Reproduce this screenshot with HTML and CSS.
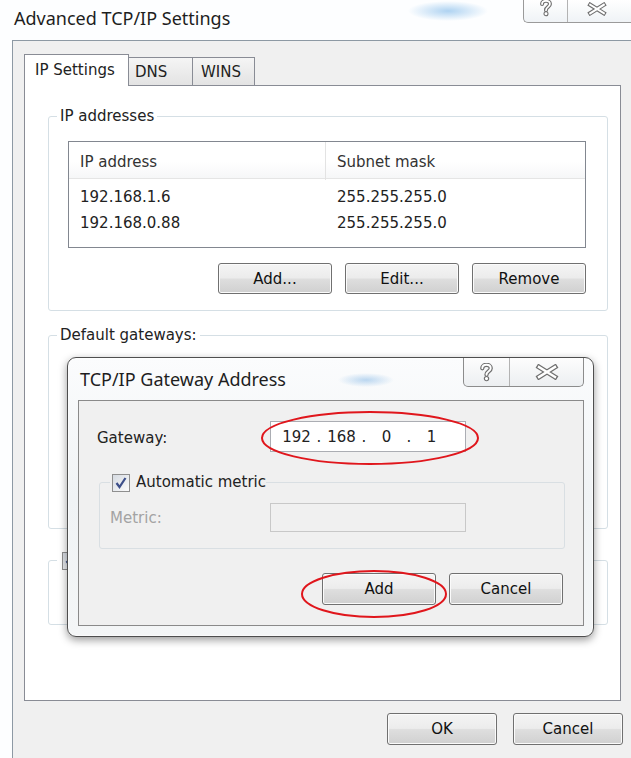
FILE: index.html
```html
<!DOCTYPE html>
<html lang="en">
<head>
<meta charset="utf-8">
<title>Advanced TCP/IP Settings</title>
<link rel="stylesheet" href="styles.css">
</head>
<body>
<div class="window">
  <header class="titlebar">
    <span class="title">Advanced TCP/IP Settings</span>
    <div class="caption">
      <span class="cap-btn cap-help">
        <svg width="14" height="18" viewBox="0 0 16 20"><path d="M3.5 5.5 C3.5 0.5 12.5 0.5 12.5 5.5 C12.5 9 8 8.5 8 12.5" fill="none" stroke="#6f6f6f" stroke-width="4.6" stroke-linecap="round"/><path d="M3.5 5.5 C3.5 0.5 12.5 0.5 12.5 5.5 C12.5 9 8 8.5 8 12.5" fill="none" stroke="#fff" stroke-width="2" stroke-linecap="round"/><circle cx="8" cy="16.5" r="2.3" fill="#fff" stroke="#6f6f6f" stroke-width="1.2"/></svg>
      </span>
      <span class="cap-btn cap-close">
        <svg width="22" height="14" viewBox="0 0 26 16"><path d="M5 3 L21 13 M21 3 L5 13" stroke="#6f6f6f" stroke-width="5" stroke-linecap="square"/><path d="M5 3 L21 13 M21 3 L5 13" stroke="#fff" stroke-width="2.4" stroke-linecap="square"/></svg>
      </span>
    </div>
  </header>

  <div class="client">
    <div class="tabs">
      <div class="tab tab-active">IP Settings</div>
      <div class="tab tab-dns">DNS</div>
      <div class="tab tab-wins">WINS</div>
    </div>

    <div class="tabpage">
      <fieldset class="group">
        <legend>IP addresses</legend>
        <div class="group-body">
          <div class="listview">
            <div class="lv-head">
              <span class="lv-col lv-col-first">IP address</span>
              <span class="lv-col">Subnet mask</span>
            </div>
            <div class="lv-rows">
              <div class="lv-row"><span>192.168.1.6</span><span>255.255.255.0</span></div>
              <div class="lv-row"><span>192.168.0.88</span><span>255.255.255.0</span></div>
            </div>
          </div>
          <div class="btn-row">
            <button class="btn">Add...</button>
            <button class="btn">Edit...</button>
            <button class="btn">Remove</button>
          </div>
        </div>
      </fieldset>

      <fieldset class="group group-gw">
        <legend>Default gateways:</legend>
        <div class="group-body gw-body"></div>
      </fieldset>

      <fieldset class="group group-metric">
        <legend>
          <span class="check-label">
            <span class="checkbox"><svg width="14" height="14" viewBox="0 0 14 14"><path d="M2.5 7 L5.5 11 L11.5 2" fill="none" stroke="#3d4f8a" stroke-width="2.2"/></svg></span>
            <span>Automatic metric</span>
          </span>
        </legend>
        <div class="metric-body"></div>
      </fieldset>
    </div>

    <div class="footer">
      <button class="btn btn-dialog">OK</button>
      <button class="btn btn-dialog">Cancel</button>
    </div>
  </div>

  <div class="modal">
    <div class="modal-titlebar">
      <span class="modal-title">TCP/IP Gateway Address</span>
      <div class="modal-caption">
        <span class="cap-btn mcap-help">
          <svg width="15" height="19" viewBox="0 0 16 20"><path d="M3.5 5.5 C3.5 0.5 12.5 0.5 12.5 5.5 C12.5 9 8 8.5 8 12.5" fill="none" stroke="#6f6f6f" stroke-width="4.6" stroke-linecap="round"/><path d="M3.5 5.5 C3.5 0.5 12.5 0.5 12.5 5.5 C12.5 9 8 8.5 8 12.5" fill="none" stroke="#fff" stroke-width="2" stroke-linecap="round"/><circle cx="8" cy="16.5" r="2.3" fill="#fff" stroke="#6f6f6f" stroke-width="1.2"/></svg>
        </span>
        <span class="cap-btn mcap-close">
          <svg width="26" height="16" viewBox="0 0 26 16"><path d="M5 3 L21 13 M21 3 L5 13" stroke="#6f6f6f" stroke-width="5" stroke-linecap="square"/><path d="M5 3 L21 13 M21 3 L5 13" stroke="#fff" stroke-width="2.4" stroke-linecap="square"/></svg>
        </span>
      </div>
    </div>

    <div class="modal-client">
      <div class="field-row">
        <span class="field-label">Gateway:</span>
        <div class="ipbox">
          <span class="ip-seg">192</span><span class="ip-dot">.</span>
          <span class="ip-seg">168</span><span class="ip-dot">.</span>
          <span class="ip-seg">0</span><span class="ip-dot">.</span>
          <span class="ip-seg">1</span>
        </div>
      </div>

      <fieldset class="metric-group">
        <legend>
          <span class="check-label">
            <span class="checkbox"><svg width="14" height="14" viewBox="0 0 14 14"><path d="M2.5 7 L5.5 11 L11.5 2" fill="none" stroke="#3d4f8a" stroke-width="2.2"/></svg></span>
            <span>Automatic metric</span>
          </span>
        </legend>
        <div class="metric-row">
          <span class="metric-label">Metric:</span>
          <div class="textbox-disabled"></div>
        </div>
      </fieldset>

      <div class="modal-buttons">
        <button class="btn btn-modal">Add</button>
        <button class="btn btn-modal">Cancel</button>
      </div>
    </div>
  </div>

  <svg class="marks" width="631" height="758" viewBox="0 0 631 758">
    <ellipse cx="370" cy="438" rx="108" ry="26" fill="none" stroke="#e0161c" stroke-width="2"/>
    <ellipse cx="374" cy="594" rx="72" ry="23" fill="none" stroke="#e0161c" stroke-width="2"/>
  </svg>
</div>
</body>
</html>
```

FILE: styles.css
```css
* {
  box-sizing: border-box;
}

html,
body {
  margin: 0;
}

body {
  width: 631px;
  height: 758px;
  overflow: hidden;
  font-family: "DejaVu Sans", "Liberation Sans", sans-serif;
  font-size: 15px;
  color: #222222;
  background: #fdfeff;
}

/* Outer dialog window with the glass frame */
.window {
  position: relative;
  width: 631px;
  height: 758px;
  padding-left: 12px;
  display: flex;
  flex-direction: column;
  background:
    radial-gradient(ellipse 40px 10px at 448px 11px, rgba(110, 175, 230, 0.55), rgba(110, 175, 230, 0)),
    #fdfeff;
}

.titlebar {
  height: 40px;
  flex: none;
  display: flex;
  align-items: flex-start;
}

.title {
  font-family: "Noto Sans", "Open Sans", sans-serif;
  font-size: 18px;
  line-height: 24px;
  margin: 6px 0 0 2px;
  color: #1e1e1e;
}

.caption {
  margin-left: auto;
  height: 23px;
  display: flex;
  border: 1px solid #9a9a9a;
  border-top: 0;
  border-right: 0;
  border-radius: 0 0 0 5px;
  background: linear-gradient(#ffffff, #eff3f6);
}

.cap-btn {
  display: flex;
  align-items: center;
  justify-content: center;
}

.cap-help {
  width: 43px;
  align-items: flex-start;
  margin-top: -1px;
}

.cap-close {
  width: 64px;
  border-left: 1px solid #b3b3b3;
  align-items: flex-start;
  padding-top: 2px;
  padding-right: 6px;
}

/* Client area of the main dialog */
.client {
  flex: 1;
  border-left: 1px solid #8d99a4;
  border-top: 1px solid #8d99a4;
  background: #f0f0f0;
  padding: 13px 10px 0 11px;
  display: flex;
  flex-direction: column;
}

.tabs {
  display: flex;
  align-items: flex-end;
  height: 31px;
  flex: none;
  position: relative;
  z-index: 1;
}

.tab {
  height: 28px;
  border: 1px solid #898c95;
  border-bottom: 0;
  background: linear-gradient(#f5f5f5, #e3e3e3);
  line-height: 28px;
  margin-left: -1px;
  white-space: nowrap;
}

.tab-active {
  height: 32px;
  width: 105px;
  margin-bottom: -1px;
  margin-left: 0;
  padding-left: 10px;
  background: #ffffff;
  line-height: 30px;
}

.tab-dns {
  width: 65px;
  padding-left: 6px;
}

.tab-wins {
  width: 63px;
  padding-left: 8px;
}

.tabpage {
  height: 616px;
  flex: none;
  border: 1px solid #898c95;
  background: #ffffff;
  padding: 20px 12px 0 23px;
}

/* Group boxes */
.group {
  margin: 0;
  min-width: 0;
  border: 1px solid #d5dfe5;
  border-radius: 3px;
  padding: 14px 21px 16px 8px;
}

.group legend {
  padding: 0 3px;
  line-height: 21px;
}

.group-body {
  margin-left: 11px;
}

.group-gw {
  margin-top: 14px;
}

.gw-body {
  height: 152px;
}

.group-metric {
  margin-top: 21px;
}

.group-metric legend {
  padding-left: 5px;
}

.metric-body {
  height: 23px;
}

/* List view */
.listview {
  height: 107px;
  border: 1px solid #828790;
  background: #ffffff;
}

.lv-head {
  display: grid;
  grid-template-columns: 257px 1fr;
  height: 37px;
  border-bottom: 1px solid #e5e5e5;
  background: linear-gradient(#ffffff 55%, #f6f7f8);
  color: #333333;
  line-height: 35px;
  padding-top: 3px;
}

.lv-col {
  padding-left: 11px;
}

.lv-col-first {
  border-right: 1px solid #e3e3e3;
  margin-top: -3px;
  padding-top: 3px;
}

.lv-rows {
  padding-top: 5px;
}

.lv-row {
  display: grid;
  grid-template-columns: 257px 1fr;
  height: 26px;
  line-height: 26px;
}

.lv-row span {
  padding-left: 11px;
}

/* Buttons */
.btn {
  font: inherit;
  color: #111111;
  width: 114px;
  height: 31px;
  padding: 0;
  border: 1px solid #707070;
  border-radius: 3px;
  background: linear-gradient(#f4f4f4 0%, #ececec 48%, #dedede 52%, #d0d0d0 100%);
  box-shadow: inset 0 0 0 1px #fbfbfb;
}

.btn-row {
  display: flex;
  justify-content: flex-end;
  gap: 13px;
  margin-top: 15px;
}

.footer {
  display: flex;
  justify-content: flex-end;
  gap: 16px;
  margin-top: 12px;
  margin-right: -2px;
}

.btn-dialog {
  width: 110px;
  height: 32px;
}

/* Checkbox */
.check-label {
  display: inline-flex;
  align-items: center;
  gap: 6px;
  height: 21px;
  vertical-align: top;
}

.checkbox {
  width: 18px;
  height: 18px;
  border: 1px solid #8f8f8f;
  background: linear-gradient(135deg, #d6dbe2, #fbfbfb);
  display: flex;
  align-items: center;
  justify-content: center;
}

/* Gateway address window */
.modal {
  position: absolute;
  left: 67px;
  top: 357px;
  width: 527px;
  height: 280px;
  border: 1px solid #4e4e4e;
  border-radius: 9px;
  background:
    radial-gradient(ellipse 28px 7px at 298px 22px, rgba(110, 170, 225, 0.45), rgba(110, 170, 225, 0)),
    linear-gradient(#fbfcfd, #f0f3f5 50%, #f4f6f7);
  box-shadow: 0 3px 8px rgba(0, 0, 0, 0.4), 0 0 0 1px rgba(255, 255, 255, 0.6) inset;
  display: flex;
  flex-direction: column;
}

.modal-titlebar {
  height: 42px;
  flex: none;
  display: flex;
  align-items: flex-start;
}

.modal-title {
  font-family: "Noto Sans", "Open Sans", sans-serif;
  font-size: 18px;
  line-height: 24px;
  margin: 9px 0 0 12px;
  color: #1e1e1e;
}

.modal-caption {
  margin-left: auto;
  margin-right: 9px;
  height: 29px;
  display: flex;
  border: 1px solid #8c8c8c;
  border-top: 0;
  border-radius: 0 0 5px 5px;
  background: linear-gradient(#fdfdfd, #eceff1);
}

.mcap-help {
  width: 45px;
}

.mcap-close {
  width: 74px;
  border-left: 1px solid #b3b3b3;
}

.modal-client {
  flex: 1;
  margin: 0 9px 10px 10px;
  border: 1px solid #8a8a8a;
  background: #f0f0f0;
  padding: 20px 20px 0 18px;
}

.field-row {
  display: flex;
  align-items: center;
  height: 31px;
}

.field-label {
  width: 173px;
  padding-top: 2px;
}

.ipbox {
  width: 196px;
  height: 31px;
  border: 1px solid #abadb3;
  background: #ffffff;
  display: flex;
  align-items: center;
  padding-left: 6px;
}

.ip-seg {
  width: 39px;
  text-align: center;
}

.ip-dot {
  width: 6px;
  text-align: center;
}

.metric-group {
  margin: 20px 0 0 2px;
  width: 466px;
  min-width: 0;
  border: 1px solid #d9dfe3;
  border-radius: 3px;
  padding: 10px 10px 16px 10px;
}

.metric-group legend {
  padding: 0 0 0 2px;
  line-height: 21px;
}

.metric-row {
  display: flex;
  align-items: center;
  height: 29px;
}

.metric-label {
  width: 160px;
  color: #a3a3a3;
}

.textbox-disabled {
  width: 196px;
  height: 29px;
  border: 1px solid #c8c8c8;
  background: #f0f0f0;
}

.modal-buttons {
  display: flex;
  justify-content: flex-end;
  gap: 13px;
  margin-top: 24px;
}

.btn-modal {
  height: 32px;
}

/* Red annotation rings drawn over the dialog */
.marks {
  position: absolute;
  left: 0;
  top: 0;
  pointer-events: none;
}
```
